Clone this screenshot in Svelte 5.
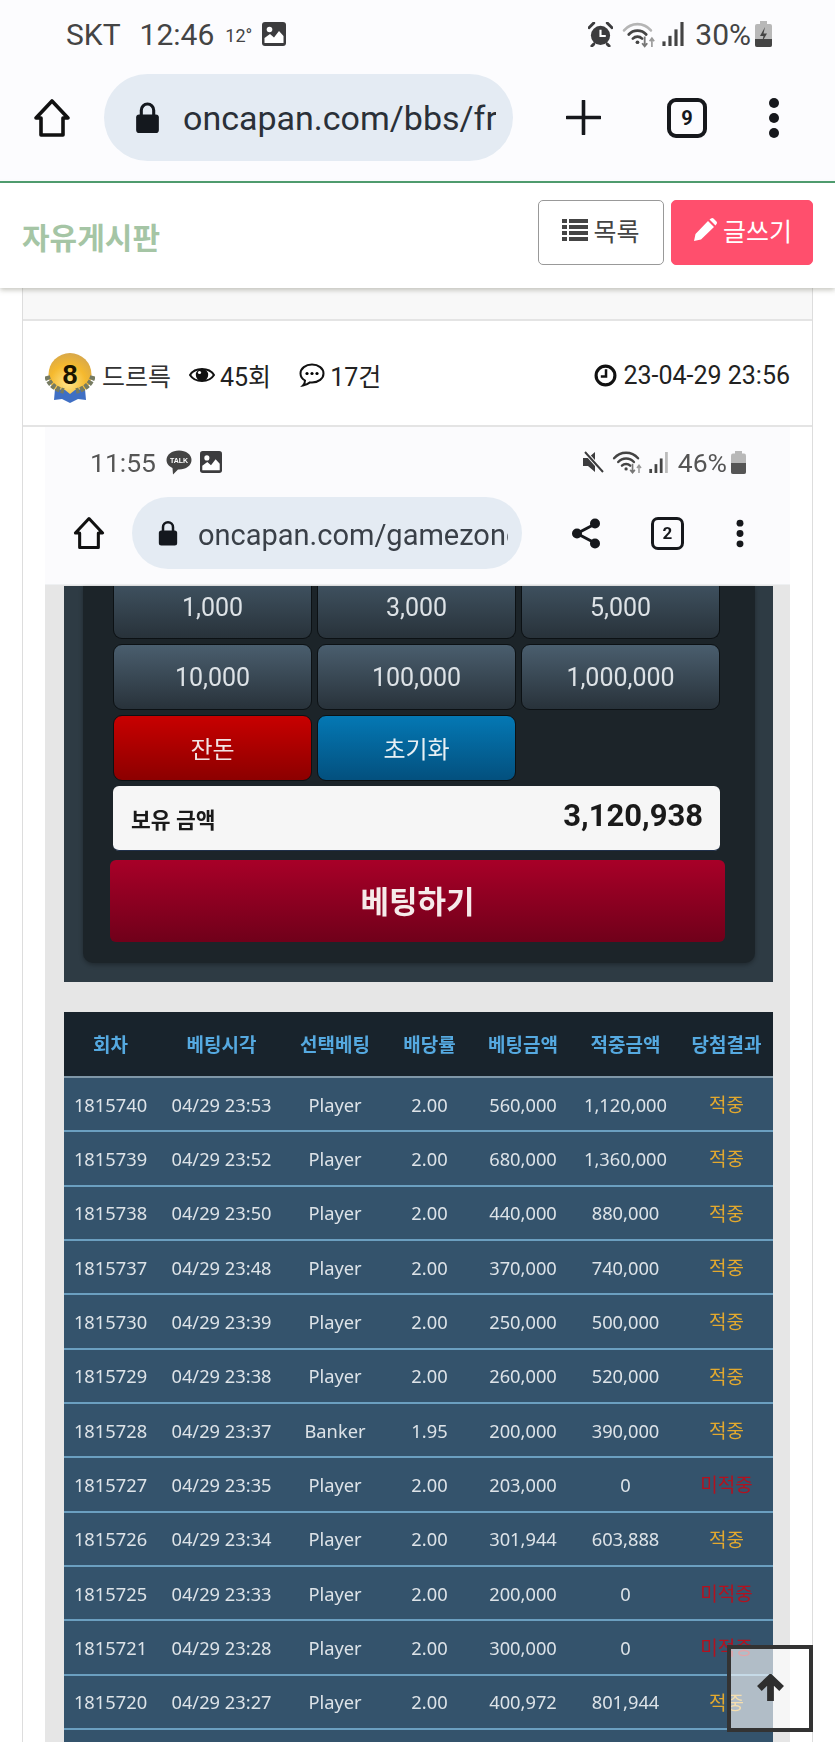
<script>
	const rows = [
		['1815740', '23:53', 'Player', '2.00', '560,000', '1,120,000', true],
		['1815739', '23:52', 'Player', '2.00', '680,000', '1,360,000', true],
		['1815738', '23:50', 'Player', '2.00', '440,000', '880,000', true],
		['1815737', '23:48', 'Player', '2.00', '370,000', '740,000', true],
		['1815730', '23:39', 'Player', '2.00', '250,000', '500,000', true],
		['1815729', '23:38', 'Player', '2.00', '260,000', '520,000', true],
		['1815728', '23:37', 'Banker', '1.95', '200,000', '390,000', true],
		['1815727', '23:35', 'Player', '2.00', '203,000', '0', false],
		['1815726', '23:34', 'Player', '2.00', '301,944', '603,888', true],
		['1815725', '23:33', 'Player', '2.00', '200,000', '0', false],
		['1815721', '23:28', 'Player', '2.00', '300,000', '0', false],
		['1815720', '23:27', 'Player', '2.00', '400,972', '801,944', true]
	];
	const heads = ['회차', '베팅시각', '선택베팅', '배당률', '베팅금액', '적중금액', '당첨결과'];
	const widths = [93, 129, 98, 91, 96, 109, 93];
	const chips = ['10,000', '100,000', '1,000,000'];
</script>

{#snippet homeIcon(cls)}
	<svg class={cls} viewBox="0 0 40 40"><path d="M20 3 L36 20 H31 V37 H9 V20 H4 Z" fill="none" stroke="#111" stroke-width="3.6" stroke-linejoin="round" /></svg>
{/snippet}

{#snippet lockIcon(cls)}
	<svg class={cls} viewBox="0 0 24 30"><path d="M6 13 V8 a6 6 0 0 1 12 0 V13" fill="none" stroke="#14181e" stroke-width="3" /><rect x="1" y="12" width="22" height="18" rx="3" fill="#14181e" /></svg>
{/snippet}

{#snippet pictureIcon(cls)}
	<svg class={cls} viewBox="0 0 24 24"><rect x="0" y="0" width="24" height="24" rx="3" fill="#3c3c3e" /><circle cx="7.5" cy="7.5" r="2.8" fill="#fff" /><path d="M2.5 21 V16 L8 12 L12 15.5 L17 9 L21.5 14 V21 Z" fill="#fff" /></svg>
{/snippet}

{#snippet wifiIcon(cls, fade)}
	<svg class={cls} viewBox="0 0 32 26">
		<g fill="none" stroke-linecap="round" stroke-width="2.6">
			<path d="M2 9 C9 1 21 1 28 9" stroke={fade} />
			<path d="M6.5 13 C11 8 19 8 23.5 13" stroke="#444" />
			<path d="M10.5 17 C13 14.5 17 14.5 19.5 17" stroke="#444" />
		</g>
		<circle cx="15" cy="20.5" r="1.8" fill="#444" />
		<path d="M22 15 V24 M19.5 21.5 L22 24.5 L24.5 21.5" fill="none" stroke="#777" stroke-width="1.8" />
		<path d="M29 25 V17 M26.8 19.5 L29 16.5 L31.2 19.5" fill="none" stroke="#999" stroke-width="1.6" />
	</svg>
{/snippet}

{#snippet signalIcon(cls, last)}
	<svg class={cls} viewBox="0 0 24 26">
		<rect x="0" y="21" width="3.4" height="5" fill="#444" />
		<rect x="6.5" y="15" width="3.4" height="11" fill="#444" />
		<rect x="13" y="8" width="3.4" height="18" fill="#444" />
		<rect x="19.5" y="0" width="3.4" height="26" fill={last} />
	</svg>
{/snippet}

{#snippet dotsIcon(cls)}
	<svg class={cls} viewBox="0 0 12 42"><circle cx="6" cy="6" r="5" fill="#16181c" /><circle cx="6" cy="21" r="5" fill="#16181c" /><circle cx="6" cy="36" r="5" fill="#16181c" /></svg>
{/snippet}

<div class="page">
	<header class="chrome">
		<div class="status">
			<span class="carrier">SKT</span>
			<span class="clock">12:46</span>
			<span class="temp">12°</span>
			{@render pictureIcon('pic')}
			<span class="spacer"></span>
			<svg class="alarm" viewBox="0 0 26 26">
				<path d="M1 6 L6 1 M25 6 L20 1 M6 23 L4 25 M20 23 L22 25" stroke="#3c3c3e" stroke-width="3" stroke-linecap="round" />
				<circle cx="13" cy="14" r="10" fill="#3c3c3e" />
				<path d="M13 8 V14.5 H18.5" fill="none" stroke="#fff" stroke-width="2.2" />
			</svg>
			{@render wifiIcon('wifi', '#b5b5b5')}
			{@render signalIcon('signal', '#444')}
			<span class="pct">30%</span>
			<svg class="batt" viewBox="0 0 17 26">
				<rect x="5" y="0" width="7" height="3" fill="#b8b8b8" />
				<rect x="0" y="3" width="17" height="23" rx="2" fill="#b8b8b8" />
				<path d="M0 18 H17 V24 a2 2 0 0 1 -2 2 H2 a2 2 0 0 1 -2 -2 Z" fill="#444" />
				<path d="M10 6 L5 15 H8.5 L7 21 L12 12.5 H8.5 Z" fill="#444" />
			</svg>
		</div>
		<div class="toolbar">
			{@render homeIcon('home')}
			<div class="pill">
				{@render lockIcon('lock')}
				<span class="url">oncapan.com/bbs/free</span>
			</div>
			<svg class="plus" viewBox="0 0 35 35"><path d="M17.5 1 V34 M1 17.5 H34" stroke="#16181c" stroke-width="3.6" stroke-linecap="round" /></svg>
			<span class="tabs">9</span>
			{@render dotsIcon('dots')}
		</div>
	</header>

	<div class="bar">
		<h1>자유게시판</h1>
		<div class="actions">
			<button class="btn list">
				<svg class="btn-icon" viewBox="0 0 26 22" fill="#444">
					<rect x="0" y="0" width="5" height="4" /><rect x="7" y="0" width="19" height="4" />
					<rect x="0" y="6" width="5" height="4" /><rect x="7" y="6" width="19" height="4" />
					<rect x="0" y="12" width="5" height="4" /><rect x="7" y="12" width="19" height="4" />
					<rect x="0" y="18" width="5" height="4" /><rect x="7" y="18" width="19" height="4" />
				</svg>
				목록
			</button>
			<button class="btn write">
				<svg class="btn-icon" viewBox="0 0 24 24" fill="#fff"><path d="M1 23 L2.5 16 L15 3 L21 9 L8 21.5 Z M16.5 1.5 L18 0.5 a2 2 0 0 1 2.5 0 L23.5 3.5 a2 2 0 0 1 0 2.5 L22.5 7.5 Z" /></svg>
				글쓰기
			</button>
		</div>
	</div>

	<main class="card">
		<div class="card-top"></div>
		<div class="meta">
			<svg class="medal" viewBox="0 0 50 50">
				<defs>
					<radialGradient id="gold" cx="0.45" cy="0.7" r="0.7">
						<stop offset="0" stop-color="#ffe58a" />
						<stop offset="0.6" stop-color="#f5b92e" />
						<stop offset="1" stop-color="#d8a84a" />
					</radialGradient>
				</defs>
				<circle cx="25" cy="21.5" r="21.5" fill="url(#gold)" />
				<path d="M10 36 L20 37 L25 41 L30 37 L40 36 L41 47 L33 46 L25 50 L17 46 L9 47 Z" fill="#3f6fc4" />
				<path d="M2 23 C4 31 10 36 19 38 M48 23 C46 31 40 36 31 38" fill="none" stroke="#767b62" stroke-width="5.5" stroke-dasharray="4 1.2" />
				<text x="25" y="31" class="medal-num">8</text>
			</svg>
			<span class="nick">드르륵</span>
			<svg class="eye" viewBox="0 0 26 18"><path d="M1 9 C6 1 20 1 25 9 C20 17 6 17 1 9 Z" fill="none" stroke="#111" stroke-width="2" /><circle cx="13" cy="9" r="6.2" fill="#111" /><circle cx="10.5" cy="6.5" r="1.6" fill="#fff" /></svg>
			<span class="count">45회</span>
			<svg class="talk" viewBox="0 0 26 24"><path d="M13 1.5 C6.5 1.5 1.5 5.5 1.5 10.5 C1.5 13.5 3.3 16 6 17.5 C6 19.5 5 21.5 4 22.5 C7 22 9.5 20.5 11 19.4 C11.6 19.5 12.3 19.5 13 19.5 C19.5 19.5 24.5 15.5 24.5 10.5 C24.5 5.5 19.5 1.5 13 1.5 Z" fill="none" stroke="#111" stroke-width="2" /><circle cx="8" cy="10.5" r="1.6" /><circle cx="13" cy="10.5" r="1.6" /><circle cx="18" cy="10.5" r="1.6" /></svg>
			<span class="count">17건</span>
			<span class="spacer"></span>
			<svg class="time" viewBox="0 0 22 22"><circle cx="11" cy="11" r="9" fill="none" stroke="#111" stroke-width="3" /><path d="M11.5 5 V12 H6.5" fill="none" stroke="#111" stroke-width="2.4" /></svg>
			<span class="date">23-04-29 23:56</span>
		</div>

		<div class="shot">
			<div class="shot-chrome">
				<div class="shot-status">
					<span class="s-clock">11:55</span>
					<svg class="s-kakao" viewBox="0 0 26 25">
						<path d="M13 0.5 C6 0.5 0.5 4.5 0.5 10 C0.5 13.5 3 16.5 6.5 18 L7 24.5 L12 19.4 C12.3 19.4 12.7 19.5 13 19.5 C20 19.5 25.5 15.5 25.5 10 C25.5 4.5 20 0.5 13 0.5 Z" fill="#444" />
						<text x="13" y="13" class="kakao-text">TALK</text>
					</svg>
					{@render pictureIcon('s-pic')}
					<span class="spacer"></span>
					<svg class="s-mute" viewBox="0 0 22 22">
						<path d="M1 7 H6 L13 1 V21 L6 15 H1 Z" fill="#3c3c3e" />
						<path d="M3 1 L21 21" stroke="#fff" stroke-width="4" />
						<path d="M3 1 L21 21" stroke="#3c3c3e" stroke-width="2" />
					</svg>
					{@render wifiIcon('s-wifi', '#444')}
					{@render signalIcon('s-signal', '#bbb')}
					<span class="s-pct">46%</span>
					<svg class="s-batt" viewBox="0 0 15 23">
						<rect x="4" y="0" width="7" height="3" fill="#b8b8b8" />
						<rect x="0" y="2.5" width="15" height="20.5" rx="2" fill="#b8b8b8" />
						<path d="M0 12 H15 V21 a2 2 0 0 1 -2 2 H2 a2 2 0 0 1 -2 -2 Z" fill="#555" />
					</svg>
				</div>
				<div class="shot-toolbar">
					{@render homeIcon('s-home')}
					<div class="s-urlpill">
						{@render lockIcon('s-lock')}
						<span class="s-url">oncapan.com/gamezone</span>
					</div>
					<svg class="s-share" viewBox="0 0 28 31">
						<path d="M23 6 L5 15.5 L23 25" fill="none" stroke="#16181c" stroke-width="3" />
						<circle cx="23" cy="5.5" r="5" fill="#16181c" /><circle cx="5" cy="15.5" r="5" fill="#16181c" /><circle cx="23" cy="25.5" r="5" fill="#16181c" />
					</svg>
					<span class="s-tabs">2</span>
					{@render dotsIcon('s-dots')}
				</div>
			</div>

			<div class="game">
				<div class="panel">
					<div class="panel-in">
						<div class="chips">
							<div class="chip cut">1,000</div>
							<div class="chip cut">3,000</div>
							<div class="chip cut">5,000</div>
							{#each chips as c}
								<div class="chip">{c}</div>
							{/each}
							<div class="chip red">잔돈</div>
							<div class="chip blue">초기화</div>
						</div>
						<div class="balance">
							<span class="bal-label">보유 금액</span>
							<span class="bal-value">3,120,938</span>
						</div>
						<div class="bet">베팅하기</div>
					</div>
				</div>

				<table class="history">
					<colgroup>
						{#each widths as w}
							<col style="width:{w}px" />
						{/each}
					</colgroup>
					<thead>
						<tr>
							{#each heads as h}
								<th>{h}</th>
							{/each}
						</tr>
					</thead>
					<tbody>
						{#each rows as r}
							<tr>
								<td>{r[0]}</td>
								<td>04/29 {r[1]}</td>
								<td>{r[2]}</td>
								<td>{r[3]}</td>
								<td>{r[4]}</td>
								<td>{r[5]}</td>
								<td class:hit={r[6]} class:miss={!r[6]}>{r[6] ? '적중' : '미적중'}</td>
							</tr>
						{/each}
						<tr><td colspan="7"></td></tr>
					</tbody>
				</table>
			</div>
		</div>
	</main>

	<button class="top" aria-label="top">
		<svg viewBox="0 0 30 30"><path d="M15 28 V4 M3.5 15 L15 4 L26.5 15" fill="none" stroke="#2e2e2e" stroke-width="7" stroke-linejoin="miter" /></svg>
	</button>
</div>

<style>
	:global(body) {
		background: #fff;
	}
	.page {
		position: relative;
		width: 835px;
		height: 1742px;
		overflow: hidden;
		background: #fff;
		font-family: Roboto, 'Noto Sans CJK KR', sans-serif;
		color: #222;
	}
	.spacer {
		flex: 1;
	}

	/* browser chrome */
	.chrome {
		height: 181px;
		background: #fcfcfe;
		border-bottom: 2px solid #4f9f70;
	}
	.status {
		height: 68px;
		display: flex;
		align-items: center;
		padding: 0 63px 0 66px;
		color: #444;
		font-size: 30px;
	}
	.clock {
		margin-left: 19px;
	}
	.temp {
		margin-left: 11px;
		font-size: 18px;
		padding-top: 2px;
	}
	.pic {
		width: 24px;
		height: 24px;
		margin-left: 10px;
	}
	.alarm {
		width: 25px;
		height: 25px;
	}
	.wifi {
		width: 33px;
		height: 27px;
		margin-left: 9px;
	}
	.signal {
		width: 23px;
		height: 24px;
		margin-left: 7px;
	}
	.pct {
		margin-left: 10px;
		font-size: 30px;
	}
	.batt {
		width: 17px;
		height: 26px;
		margin-left: 4px;
	}
	.toolbar {
		height: 113px;
		display: flex;
		align-items: center;
		padding: 0 0 0 32px;
		margin-top: -7px;
	}
	.home {
		width: 40px;
		height: 40px;
	}
	.pill {
		width: 409px;
		height: 87px;
		margin-left: 32px;
		border-radius: 44px;
		background: #e4ebf3;
		display: flex;
		align-items: center;
		padding: 0 17px 0 31px;
		box-sizing: border-box;
		overflow: hidden;
	}
	.lock {
		width: 25px;
		height: 31px;
		flex: none;
	}
	.url {
		margin-left: 23px;
		font-size: 34px;
		color: #2a3038;
		white-space: nowrap;
		overflow: hidden;
	}
	.plus {
		width: 35px;
		height: 35px;
		margin-left: 53px;
	}
	.tabs {
		width: 40px;
		height: 40px;
		box-sizing: border-box;
		margin-left: 66px;
		border: 4px solid #16181c;
		border-radius: 9px;
		display: flex;
		align-items: center;
		justify-content: center;
		font-size: 20px;
		font-weight: 700;
		color: #16181c;
	}
	.dots {
		width: 12px;
		height: 42px;
		margin-left: 61px;
	}

	/* board title bar */
	.bar {
		position: relative;
		height: 105px;
		display: flex;
		align-items: center;
		justify-content: space-between;
		padding: 0 22px;
		background: #fff;
		box-shadow: 0 2px 5px rgba(90, 90, 70, 0.35);
	}
	h1 {
		margin: 0;
		font-size: 30px;
		font-weight: 700;
		color: #a5c5a5;
	}
	.actions {
		display: flex;
		gap: 7px;
		margin-top: -7px;
	}
	.btn {
		height: 65px;
		border-radius: 5px;
		font: 400 25px Roboto, 'Noto Sans CJK KR', sans-serif;
		display: flex;
		align-items: center;
		justify-content: center;
		gap: 5px;
		padding: 0;
		padding-bottom: 4px;
	}
	.list {
		width: 126px;
		background: #fff;
		border: 1px solid #999;
		color: #444;
	}
	.write {
		width: 142px;
		background: #ff4f6d;
		border: 1px solid #ff4f6d;
		color: #fff;
	}
	.btn-icon {
		width: 26px;
		height: 24px;
	}

	/* card */
	.card {
		margin: 0 22px;
		border-left: 1px solid #ddd;
		border-right: 1px solid #ddd;
	}
	.card-top {
		height: 31px;
		background: #f8f8f8;
		border-bottom: 2px solid #e4e4e4;
	}
	.meta {
		height: 106px;
		box-sizing: border-box;
		border-bottom: 2px solid #e4e4e4;
		display: flex;
		align-items: center;
		padding: 4px 22px 0 22px;
		font-size: 25px;
		color: #222;
	}
	.medal {
		width: 50px;
		height: 50px;
		margin-top: 6px;
	}
	.medal-num {
		font: 700 27px 'Liberation Sans', sans-serif;
		text-anchor: middle;
		fill: #1a1400;
	}
	.nick {
		margin-left: 7px;
		color: #333;
	}
	.eye {
		width: 26px;
		height: 18px;
		margin-left: 18px;
	}
	.talk {
		width: 26px;
		height: 24px;
		margin-left: 28px;
	}
	.count {
		margin-left: 5px;
	}
	.time {
		width: 23px;
		height: 23px;
	}
	.date {
		margin-left: 6px;
	}

	/* pasted screenshot */
	.shot {
		margin: 0 22px;
		filter: blur(0.35px);
	}
	.shot-chrome {
		height: 158px;
		background: #fbfbfd;
		border-bottom: 1px solid #eef0f2;
		box-sizing: border-box;
	}
	.shot-status {
		height: 70px;
		display: flex;
		align-items: center;
		padding: 0 44px 0 45px;
		color: #555;
		font-size: 26.5px;
	}
	.s-kakao {
		width: 26px;
		height: 25px;
		margin-left: 10px;
	}
	.kakao-text {
		font: 700 7px 'Liberation Sans', sans-serif;
		text-anchor: middle;
		fill: #fff;
	}
	.s-pic {
		width: 22px;
		height: 22px;
		margin-left: 8px;
	}
	.s-mute {
		width: 22px;
		height: 22px;
	}
	.s-wifi {
		width: 30px;
		height: 24px;
		margin-left: 8px;
	}
	.s-signal {
		width: 20px;
		height: 21px;
		margin-left: 7px;
	}
	.s-pct {
		margin-left: 9px;
	}
	.s-batt {
		width: 15px;
		height: 23px;
		margin-left: 4px;
	}
	.shot-toolbar {
		height: 72px;
		display: flex;
		align-items: center;
		padding-left: 27px;
	}
	.s-home {
		width: 34px;
		height: 34px;
	}
	.s-urlpill {
		width: 390px;
		height: 72px;
		margin-left: 26px;
		border-radius: 36px;
		background: #e4ebf3;
		display: flex;
		align-items: center;
		padding: 0 14px 0 26px;
		box-sizing: border-box;
		overflow: hidden;
	}
	.s-lock {
		width: 20px;
		height: 26px;
		flex: none;
	}
	.s-url {
		margin-left: 20px;
		padding-top: 3px;
		font-size: 29px;
		color: #3a4048;
		white-space: nowrap;
		overflow: hidden;
	}
	.s-share {
		width: 28px;
		height: 31px;
		margin-left: 50px;
	}
	.s-tabs {
		width: 33px;
		height: 33px;
		box-sizing: border-box;
		margin-left: 51px;
		border: 3px solid #16181c;
		border-radius: 7px;
		display: flex;
		align-items: center;
		justify-content: center;
		font-size: 17px;
		font-weight: 700;
		color: #16181c;
	}
	.s-dots {
		width: 10px;
		height: 29px;
		margin-left: 51px;
	}

	/* game capture */
	.game {
		background: #e6e6e6;
		padding: 1px 17px 0 19px;
	}
	.panel {
		background: #2e3b44;
		padding: 0 18px 19px 19px;
	}
	.panel-in {
		background: #1c2429;
		border-radius: 0 0 10px 10px;
		padding: 0 30px 21px;
		box-shadow: 0 2px 4px rgba(0, 0, 0, 0.3);
	}
	.chips {
		display: grid;
		grid-template-columns: repeat(3, 199px);
		grid-template-rows: 53px 66px 66px;
		gap: 5px;
	}
	.chip {
		border: 1px solid #0c1114;
		border-radius: 9px;
		box-sizing: border-box;
		background: linear-gradient(#4a5e6e, #28323a);
		color: #dde2e6;
		font-size: 25px;
		display: flex;
		align-items: center;
		justify-content: center;
	}
	.cut {
		border-top: 0;
		border-radius: 0 0 9px 9px;
		padding-bottom: 9px;
		background: linear-gradient(#3e505e, #28323a);
	}
	.red {
		background: linear-gradient(#c80000, #8c0000);
		color: #f2e4e4;
		font-size: 24px;
		padding-bottom: 2px;
	}
	.blue {
		background: linear-gradient(#0478b4, #03507e);
		color: #e8f0f4;
		font-size: 24px;
		padding-bottom: 2px;
	}
	.balance {
		width: 607px;
		height: 65px;
		margin-top: 5px;
		border-radius: 6px;
		background: #f6f6f6;
		border-bottom: 1px solid #20304a;
		box-sizing: border-box;
		display: flex;
		align-items: center;
		justify-content: space-between;
		padding: 0 17px 0 18px;
		color: #1a1a1a;
	}
	.bal-label {
		font-size: 21.5px;
		font-weight: 700;
	}
	.bal-value {
		font-size: 31px;
		font-weight: 700;
		padding-bottom: 5px;
	}
	.bet {
		width: 615px;
		height: 82px;
		margin: 9px 0 0 -3px;
		padding-bottom: 4px;
		box-sizing: border-box;
		border-radius: 6px;
		background: linear-gradient(#a80028, #70001a);
		display: flex;
		align-items: center;
		justify-content: center;
		color: #f6eaea;
		font-size: 31px;
		font-weight: 700;
	}

	.history {
		width: 709px;
		margin-top: 30px;
		table-layout: fixed;
		border-collapse: collapse;
		font-family: 'Noto Sans', 'Noto Sans CJK KR', sans-serif;
	}
	.history th {
		height: 65px;
		padding: 0;
		background: #18232c;
		border-bottom: 2px solid #7f97a8;
		color: #55a9e0;
		font-size: 19px;
		font-weight: 700;
		box-sizing: border-box;
	}
	.history td {
		height: 54.33px;
		padding: 0;
		box-sizing: border-box;
		background: #34536c;
		border-bottom: 2px solid #6b9fc0;
		color: #dde3e8;
		font-size: 18.3px;
		text-align: center;
		white-space: nowrap;
	}
	.history td.hit {
		color: #e3a92e;
		font-size: 19px;
	}
	.history td.miss {
		color: #b3121f;
		font-size: 19px;
	}

	/* scroll-to-top floats over the page */
	.top {
		position: absolute;
		left: 727px;
		top: 1645px;
		width: 86px;
		height: 87px;
		box-sizing: border-box;
		border: 4px solid #333;
		background: rgba(255, 255, 255, 0.62);
		padding: 0;
		display: flex;
		align-items: center;
		justify-content: center;
	}
	.top svg {
		width: 29px;
		height: 29px;
	}
</style>
